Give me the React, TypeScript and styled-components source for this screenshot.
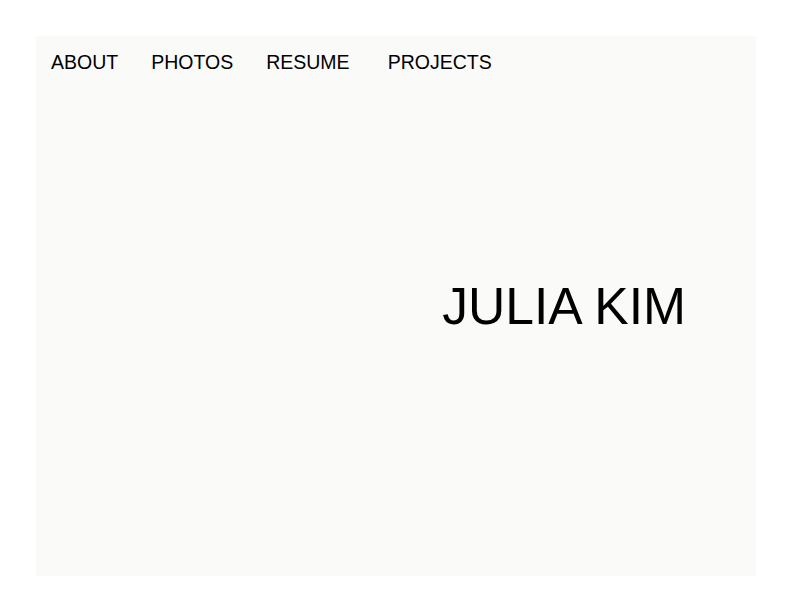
import React from "react";
import styled, { createGlobalStyle } from "styled-components";

const Global = createGlobalStyle`
  html, body {
    margin: 0;
    padding: 0;
    background: #ffffff;
  }
  body {
    font-family: "Liberation Sans", Arial, Helvetica, sans-serif;
    color: #000;
  }
`;

const Page = styled.div`
  padding: 36px;
  width: 792px;
  box-sizing: border-box;
`;

const Panel = styled.main`
  width: 720px;
  height: 540px;
  background: #fafbf8;
  display: grid;
  grid-template-areas: "stack";
`;

const Nav = styled.nav`
  grid-area: stack;
  align-self: start;
  justify-self: start;
  display: flex;
  padding: 15px 0 0 15px;
`;

const NavLink = styled.a<{ $space: number }>`
  font-size: 19.5px;
  color: #000;
  text-decoration: none;
  margin-right: ${(p) => p.$space}px;
`;

const Hero = styled.h1`
  grid-area: stack;
  align-self: center;
  justify-self: end;
  margin: 0 70px 0 0;
  font-size: 51.6px;
  font-weight: 400;
  color: #000;
`;

const links = [
  { label: "ABOUT", space: 33 },
  { label: "PHOTOS", space: 33 },
  { label: "RESUME", space: 38 },
  { label: "PROJECTS", space: 0 },
];

export default function App() {
  return (
    <>
      <Global />
      <Page>
        <Panel>
          <Nav>
            {links.map((l) => (
              <NavLink key={l.label} href="#" $space={l.space}>
                {l.label}
              </NavLink>
            ))}
          </Nav>
          <Hero>JULIA KIM</Hero>
        </Panel>
      </Page>
    </>
  );
}
